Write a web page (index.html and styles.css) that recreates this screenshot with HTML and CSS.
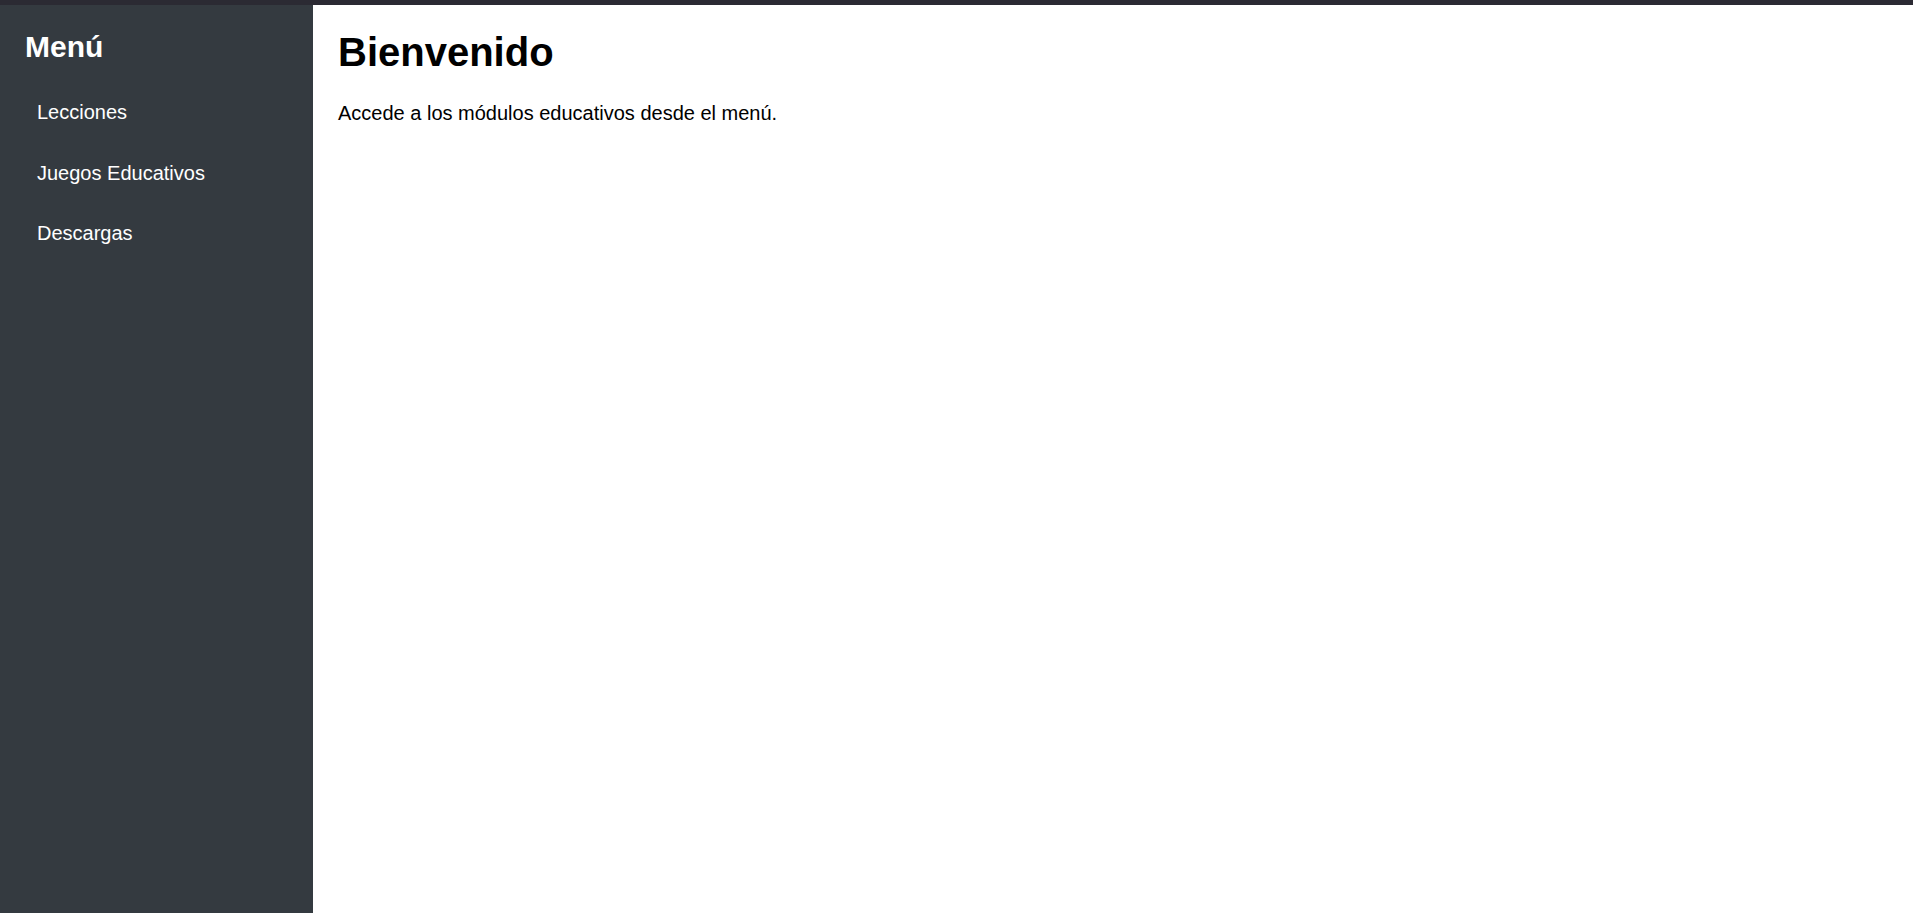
FILE: index.html
```html
<!DOCTYPE html>
<html lang="es">
<head>
<meta charset="utf-8">
<title>Menú</title>
<link rel="stylesheet" href="styles.css">
</head>
<body>
<div class="topbar"></div>
<div class="layout">
  <nav class="sidebar">
    <h2 class="sidebar-title">Menú</h2>
    <ul class="menu">
      <li class="menu-item"><a class="menu-link" href="#">Lecciones</a></li>
      <li class="menu-item"><a class="menu-link" href="#">Juegos Educativos</a></li>
      <li class="menu-item"><a class="menu-link" href="#">Descargas</a></li>
    </ul>
  </nav>
  <main class="content">
    <h1 class="title">Bienvenido</h1>
    <p class="lead">Accede a los módulos educativos desde el menú.</p>
  </main>
</div>
</body>
</html>
```

FILE: styles.css
```css
html, body {
  margin: 0;
  padding: 0;
  height: 100%;
}
body {
  font-family: "Liberation Sans", Arial, sans-serif;
  font-size: 20px;
  color: #000;
  background: #fff;
  display: flex;
  flex-direction: column;
}
.topbar {
  height: 5px;
  background: #2b2a33;
  flex: none;
}
.layout {
  flex: 1;
  display: flex;
  min-height: 0;
}
.sidebar {
  width: 313px;
  box-sizing: border-box;
  background: #343a40;
  color: #fff;
  padding: 25px;
  flex: none;
}
.sidebar-title {
  margin: 0 0 24.9px;
  font-size: 30px;
  font-weight: bold;
}
.menu {
  list-style: none;
  margin: 0;
  padding: 0;
}
.menu-item {
  margin-bottom: 12.5px;
}
.menu-link {
  display: block;
  padding: 12.5px 12px;
  color: #fff;
  text-decoration: none;
}
.content {
  flex: 1;
  padding: 25px;
}
.title {
  margin: 0 0 26.8px;
  font-size: 40px;
  font-weight: bold;
}
.lead {
  margin: 0;
}
```
